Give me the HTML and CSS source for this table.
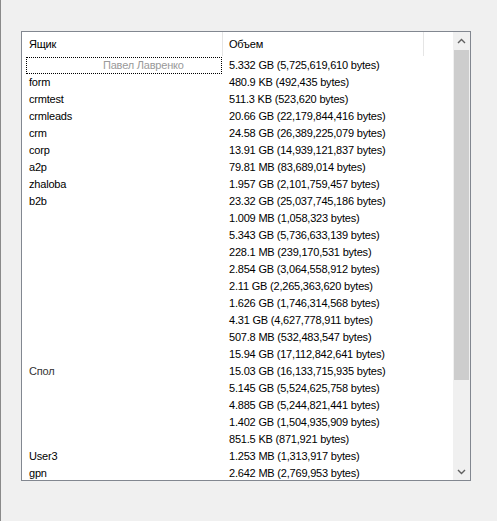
FILE: index.html
```html
<!DOCTYPE html>
<html>
<head>
<meta charset="utf-8">
<link rel="stylesheet" href="styles.css">
</head>
<body>
<div class="window">
  <div class="listview">
    <div class="content">
      <div class="header">
        <div class="hcell c1">Ящик</div>
        <div class="hcell c2">Объем</div>
        <div class="hcell c3"></div>
      </div>
      <div class="rows">
        <div class="row selected"><div class="cell c1"><span class="focus"><span class="blur">Павел Лавренко</span></span></div><div class="cell c2">5.332 GB (5,725,619,610 bytes)</div></div>
        <div class="row"><div class="cell c1">form</div><div class="cell c2">480.9 KB (492,435 bytes)</div></div>
        <div class="row"><div class="cell c1">crmtest</div><div class="cell c2">511.3 KB (523,620 bytes)</div></div>
        <div class="row"><div class="cell c1">crmleads</div><div class="cell c2">20.66 GB (22,179,844,416 bytes)</div></div>
        <div class="row"><div class="cell c1">crm</div><div class="cell c2">24.58 GB (26,389,225,079 bytes)</div></div>
        <div class="row"><div class="cell c1">corp</div><div class="cell c2">13.91 GB (14,939,121,837 bytes)</div></div>
        <div class="row"><div class="cell c1">a2p</div><div class="cell c2">79.81 MB (83,689,014 bytes)</div></div>
        <div class="row"><div class="cell c1">zhaloba</div><div class="cell c2">1.957 GB (2,101,759,457 bytes)</div></div>
        <div class="row"><div class="cell c1">b2b</div><div class="cell c2">23.32 GB (25,037,745,186 bytes)</div></div>
        <div class="row"><div class="cell c1"></div><div class="cell c2">1.009 MB (1,058,323 bytes)</div></div>
        <div class="row"><div class="cell c1"></div><div class="cell c2">5.343 GB (5,736,633,139 bytes)</div></div>
        <div class="row"><div class="cell c1"></div><div class="cell c2">228.1 MB (239,170,531 bytes)</div></div>
        <div class="row"><div class="cell c1"></div><div class="cell c2">2.854 GB (3,064,558,912 bytes)</div></div>
        <div class="row"><div class="cell c1"></div><div class="cell c2">2.11 GB (2,265,363,620 bytes)</div></div>
        <div class="row"><div class="cell c1"></div><div class="cell c2">1.626 GB (1,746,314,568 bytes)</div></div>
        <div class="row"><div class="cell c1"></div><div class="cell c2">4.31 GB (4,627,778,911 bytes)</div></div>
        <div class="row"><div class="cell c1"></div><div class="cell c2">507.8 MB (532,483,547 bytes)</div></div>
        <div class="row"><div class="cell c1"></div><div class="cell c2">15.94 GB (17,112,842,641 bytes)</div></div>
        <div class="row"><div class="cell c1"><span class="frag">Спол</span></div><div class="cell c2">15.03 GB (16,133,715,935 bytes)</div></div>
        <div class="row"><div class="cell c1"></div><div class="cell c2">5.145 GB (5,524,625,758 bytes)</div></div>
        <div class="row"><div class="cell c1"></div><div class="cell c2">4.885 GB (5,244,821,441 bytes)</div></div>
        <div class="row"><div class="cell c1"></div><div class="cell c2">1.402 GB (1,504,935,909 bytes)</div></div>
        <div class="row"><div class="cell c1"></div><div class="cell c2">851.5 KB (871,921 bytes)</div></div>
        <div class="row"><div class="cell c1">User3</div><div class="cell c2">1.253 MB (1,313,917 bytes)</div></div>
        <div class="row"><div class="cell c1">gpn</div><div class="cell c2">2.642 MB (2,769,953 bytes)</div></div>
      </div>
    </div>
    <div class="scrollbar">
      <div class="sbtn">
        <svg width="9" height="6" viewBox="0 0 9 6"><path d="M1 5 L4.5 1.5 L8 5" fill="none" stroke="#606060" stroke-width="1.4"/></svg>
      </div>
      <div class="track"><div class="thumb"></div></div>
      <div class="sbtn">
        <svg width="9" height="6" viewBox="0 0 9 6"><path d="M1 1 L4.5 4.5 L8 1" fill="none" stroke="#606060" stroke-width="1.4"/></svg>
      </div>
    </div>
  </div>
</div>
</body>
</html>
```
FILE: styles.css
```css
html, body {
  margin: 0;
  padding: 0;
  background: #f0f0f0;
}
body {
  width: 497px;
  height: 521px;
  overflow: hidden;
  font-family: "Liberation Sans", Arial, sans-serif;
  font-size: 11px;
  letter-spacing: -0.2px;
  color: #000;
}
.window {
  height: 521px;
  border-left: 1px solid #8a8a8a;
  box-sizing: border-box;
  padding: 31px 0 0 20px;
}
.listview {
  width: 450px;
  height: 450px;
  box-sizing: border-box;
  border: 1px solid #828790;
  background: #fff;
  display: flex;
  overflow: hidden;
}
.content {
  width: 431px;
  display: flex;
  flex-direction: column;
  overflow: hidden;
}
.header {
  display: flex;
  height: 25px;
  flex: none;
}
.hcell {
  box-sizing: border-box;
  height: 24px;
  line-height: 25px;
  padding-left: 7px;
  border-right: 1px solid #e5e5e5;
}
.header .c1 { width: 201px; }
.header .c2 { width: 201px; padding-left: 6px; }
.header .c3 { flex: 1; border-right: none; }
.rows {
  display: flex;
  flex-direction: column;
}
.row {
  display: flex;
  height: 17px;
  flex: none;
  line-height: 17px;
}
.cell {
  box-sizing: border-box;
  white-space: nowrap;
  overflow: hidden;
}
.row .c1 { width: 201px; padding-left: 7px; }
.row .c2 { width: 200px; padding-left: 6px; }
.row.selected .c1 { padding-left: 4px; }
.focus {
  display: block;
  box-sizing: border-box;
  width: 196px;
  height: 17px;
  border: 1px dotted #000;
  padding-left: 76px;
  line-height: 15px;
}
.blur {
  color: #9a9a9a;
}
.frag {
  color: #333;
}
.scrollbar {
  width: 17px;
  flex: none;
  background: #f0f0f0;
  display: flex;
  flex-direction: column;
}
.sbtn {
  height: 17px;
  flex: none;
  display: flex;
  align-items: center;
  justify-content: center;
}
.track {
  flex: 1;
  padding: 1px 1px 0 1px;
}
.thumb {
  height: 330px;
  background: #cdcdcd;
}
```
